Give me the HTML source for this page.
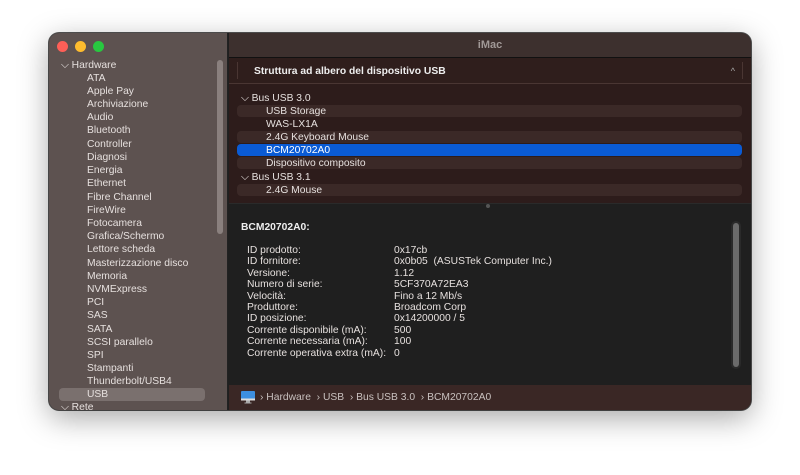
<!DOCTYPE html>
<html><head><meta charset="utf-8"><style>
*{margin:0;padding:0;box-sizing:border-box}
body{width:800px;height:475px;background:#fff;font-family:"Liberation Sans",sans-serif;position:relative;overflow:hidden}
.win{position:absolute;left:49px;top:33px;width:702px;height:377px;border-radius:10px;overflow:hidden;box-shadow:0 8px 30px rgba(0,0,0,.35),0 0 0 1px #555;background:#1f1f1f}
.side{position:absolute;left:0;top:0;width:179px;height:377px;background:#5d5250;border-right:1px solid #222}
.t{position:absolute;font-size:10.3px;color:#e6e0de;white-space:nowrap;line-height:13px}
.dot{position:absolute;top:8px;width:11px;height:11px;border-radius:50%}
.title{position:absolute;left:180px;top:0;right:0;height:25px;background:#3d302e;border-bottom:1px solid #111}
.head{position:absolute;left:180px;top:25px;right:0;height:26px;background:#2f1e1c;border-bottom:1px solid #4a3633}
.tree{position:absolute;left:180px;top:51px;right:0;height:119px;background:#2d1c1b}
.stripe{position:absolute;left:8px;right:9px;height:12px;background:#3b2927;border-radius:4px}
.det{position:absolute;left:180px;top:170px;right:0;height:182px;background:#1f1f1f;border-top:1px solid #2a2a2a}
.path{position:absolute;left:180px;top:352px;right:0;height:25px;background:#3a2725}
</style></head><body>
<div class="win">
 <div class="side">
  <div class="dot" style="left:8px;background:#fe5f57"></div>
  <div class="dot" style="left:26px;background:#febc2e"></div>
  <div class="dot" style="left:44px;background:#28c840"></div>
  <div style="position:absolute;left:168px;top:27px;width:6px;height:174px;border-radius:3px;background:#8a807e"></div>
  <div style="position:absolute;left:10px;top:355px;width:146px;height:13px;border-radius:4px;background:#7a706e"></div>
  <div class="t" style="left:12px;top:26px">⌵ Hardware</div>
  <div class="t" style="left:38px;top:39px">ATA</div>
  <div class="t" style="left:38px;top:52px">Apple Pay</div>
  <div class="t" style="left:38px;top:65px">Archiviazione</div>
  <div class="t" style="left:38px;top:78px">Audio</div>
  <div class="t" style="left:38px;top:91px">Bluetooth</div>
  <div class="t" style="left:38px;top:105px">Controller</div>
  <div class="t" style="left:38px;top:118px">Diagnosi</div>
  <div class="t" style="left:38px;top:131px">Energia</div>
  <div class="t" style="left:38px;top:144px">Ethernet</div>
  <div class="t" style="left:38px;top:158px">Fibre Channel</div>
  <div class="t" style="left:38px;top:171px">FireWire</div>
  <div class="t" style="left:38px;top:184px">Fotocamera</div>
  <div class="t" style="left:38px;top:197px">Grafica/Schermo</div>
  <div class="t" style="left:38px;top:210px">Lettore scheda</div>
  <div class="t" style="left:38px;top:224px">Masterizzazione disco</div>
  <div class="t" style="left:38px;top:237px">Memoria</div>
  <div class="t" style="left:38px;top:250px">NVMExpress</div>
  <div class="t" style="left:38px;top:263px">PCI</div>
  <div class="t" style="left:38px;top:276px">SAS</div>
  <div class="t" style="left:38px;top:290px">SATA</div>
  <div class="t" style="left:38px;top:303px">SCSI parallelo</div>
  <div class="t" style="left:38px;top:316px">SPI</div>
  <div class="t" style="left:38px;top:329px">Stampanti</div>
  <div class="t" style="left:38px;top:342px">Thunderbolt/USB4</div>
  <div class="t" style="left:38px;top:355px">USB</div>
  <div class="t" style="left:12px;top:368px">⌵ Rete</div>
 </div>
 <div class="title"><div class="t" style="left:0;right:0;text-align:center;top:6px;font-weight:bold;color:#a09896;font-size:11px">iMac</div></div>
 <div class="head">
  <div style="position:absolute;left:8px;top:4px;width:1px;height:17px;background:#4a3633"></div>
  <div class="t" style="left:25px;top:7px;font-weight:bold;color:#eee">Struttura ad albero del dispositivo USB</div>
  <div class="t" style="right:16px;top:7px;color:#aaa;font-size:9px">^</div>
  <div style="position:absolute;right:8px;top:4px;width:1px;height:17px;background:#4a3633"></div>
 </div>
 <div class="tree">
  <div class="stripe" style="top:21px"></div>
  <div class="stripe" style="top:47px"></div>
  <div class="stripe" style="top:60px;background:#0a5bd5;height:12px"></div>
  <div class="stripe" style="top:73px"></div>
  <div class="stripe" style="top:100px"></div>
  <div class="t" style="left:12px;top:8px">⌵ Bus USB 3.0</div>
  <div class="t" style="left:37px;top:21px">USB Storage</div>
  <div class="t" style="left:37px;top:34px">WAS-LX1A</div>
  <div class="t" style="left:37px;top:47px">2.4G Keyboard Mouse</div>
  <div class="t" style="left:37px;top:60px;color:#fff">BCM20702A0</div>
  <div class="t" style="left:37px;top:73px">Dispositivo composito</div>
  <div class="t" style="left:12px;top:87px">⌵ Bus USB 3.1</div>
  <div class="t" style="left:37px;top:100px">2.4G Mouse</div>
 </div>
 <div class="det">
  <div style="position:absolute;left:257px;top:0;width:4px;height:4px;border-radius:2px;background:#555"></div>
  <div style="position:absolute;right:10px;top:17px;width:10px;height:148px;border-radius:5px;background:#2a2a2a"></div>
  <div style="position:absolute;right:12px;top:19px;width:6px;height:144px;border-radius:3px;background:#6b6b6b"></div>
  <div class="t" style="left:12px;top:17px;font-weight:bold;color:#eee">BCM20702A0:</div>
  <div class="t" style="left:18px;top:41px;line-height:11.4px">ID prodotto:<br>ID fornitore:<br>Versione:<br>Numero di serie:<br>Velocità:<br>Produttore:<br>ID posizione:<br>Corrente disponibile (mA):<br>Corrente necessaria (mA):<br>Corrente operativa extra (mA):</div>
  <div class="t" style="left:165px;top:41px;line-height:11.4px">0x17cb<br>0x0b05 &nbsp;(ASUSTek Computer Inc.)<br>1.12<br>5CF370A72EA3<br>Fino a 12 Mb/s<br>Broadcom Corp<br>0x14200000 / 5<br>500<br>100<br>0</div>
 </div>
 <div class="path">
  <svg style="position:absolute;left:12px;top:6px" width="14" height="13" viewBox="0 0 14 13"><rect x="0" y="0" width="14" height="9" rx="1" fill="#3d8fe0"/><rect x="0" y="7.5" width="14" height="2" fill="#ddd"/><rect x="5" y="9.5" width="4" height="2" fill="#aaa"/><rect x="3.5" y="11.5" width="7" height="1" fill="#aaa"/></svg>
  <div class="t" style="left:31px;top:6px;color:#c8c0be">› Hardware &nbsp;› USB &nbsp;› Bus USB 3.0 &nbsp;› BCM20702A0</div>
 </div>
</div>
</body></html>
